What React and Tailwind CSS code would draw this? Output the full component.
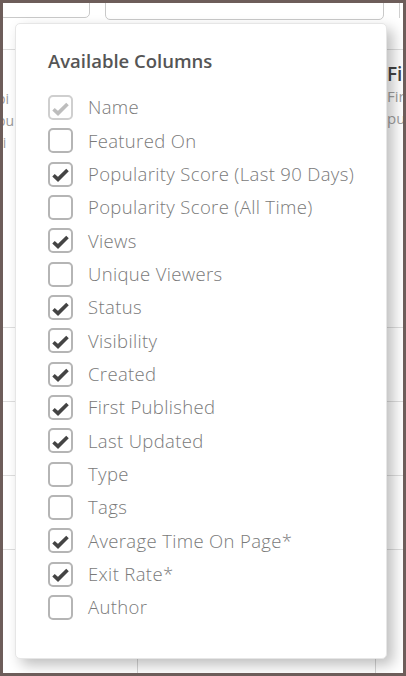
import React from 'react';

const columns = [
  { label: 'Name', checked: true, disabled: true },
  { label: 'Featured On', checked: false },
  { label: 'Popularity Score (Last 90 Days)', checked: true },
  { label: 'Popularity Score (All Time)', checked: false },
  { label: 'Views', checked: true },
  { label: 'Unique Viewers', checked: false },
  { label: 'Status', checked: true },
  { label: 'Visibility', checked: true },
  { label: 'Created', checked: true },
  { label: 'First Published', checked: true },
  { label: 'Last Updated', checked: true },
  { label: 'Type', checked: false },
  { label: 'Tags', checked: false },
  { label: 'Average Time On Page*', checked: true },
  { label: 'Exit Rate*', checked: true },
  { label: 'Author', checked: false },
];

function CheckMark({ color }) {
  return (
    <svg width="17" height="14" viewBox="0 0 17 14" className="mt-[2px] -ml-[1px]">
      <path d="M1.5 7.2 L6 11.4 L15.5 2" fill="none" stroke={color} strokeWidth="3.6" strokeLinejoin="miter" />
    </svg>
  );
}

function ColumnRow({ label, checked, disabled }) {
  return (
    <label className="flex h-[33.33px] items-center gap-[15px]">
      <span
        className={`flex h-[25px] w-[25px] shrink-0 items-center justify-center rounded-[5px] border-2 bg-white ${
          disabled ? 'border-[#cfcfcf]' : 'border-[#b5b5b5]'
        }`}
      >
        {checked && <CheckMark color={disabled ? '#bdbdbd' : '#444444'} />}
      </span>
      <span className="text-[18.5px] font-light leading-none tracking-[0.35px] text-[#7a7a7a]">{label}</span>
    </label>
  );
}

export default function App() {
  return (
    <div className="relative h-[676px] w-[406px] overflow-hidden border-[3px] border-[#6d5d5a] bg-white font-['Open_Sans',sans-serif]">
      {/* table behind the menu */}
      <div className="flex h-[17px] gap-[15px]">
        <div className="-mt-[4px] h-[19px] w-[91px] shrink-0 -ml-[4px] rounded-b-[5px] border border-[#c9c9c9]" />
        <div className="-mt-[4px] h-[21px] w-[279px] shrink-0 rounded-b-[5px] border border-[#c9c9c9]" />
        <div className="-mt-[4px] h-[19px] w-[20px] shrink-0 border-l border-[#d0d0d0]" />
      </div>
      <div className="mt-[29px] border-t border-[#dedede]" />
      <div className="flex">
        <div className="w-[134px] shrink-0 pt-[38px] text-[14px] leading-[22px] text-[#9a9a9a]">
          <div className="-ml-[6px]">pi</div>
          <div className="-ml-[6px]">pu</div>
          <div className="-ml-[6px]">ri</div>
        </div>
        <div className="w-[238px] shrink-0" />
        <div className="pl-[12px] pt-[13px]">
          <div className="text-[19px] font-semibold leading-[22px] text-[#444]">First</div>
          <div className="text-[15px] leading-[22px] text-[#a0a0a0]">First</div>
          <div className="text-[15px] leading-[22px] text-[#a0a0a0]">pub</div>
        </div>
      </div>
      <div className="mt-[173px] flex flex-col">
        <div className="h-[74px] border-t border-[#dedede]" />
        <div className="h-[74px] border-t border-[#dedede]" />
        <div className="h-[74px] border-t border-[#dedede]" />
        <div className="h-[100px] border-t border-[#dedede]" />
      </div>
      <div className="absolute bottom-0 left-[134px] h-[14px] border-l border-[#d5d5d5]" />
      <div className="absolute bottom-0 left-[372px] h-[14px] border-l border-[#d5d5d5]" />

      {/* column picker menu */}
      <div className="absolute left-[12px] top-[20px] h-[636px] w-[372px] rounded-[5px] border border-[#e6e6e6] bg-white pl-[32px] pt-[25px] shadow-[6px_6px_14px_rgba(0,0,0,0.26)]">
        <h3 className="text-[18.5px] font-semibold leading-[24px] text-[#555]">Available Columns</h3>
        <div className="mt-[18px] flex flex-col">
          {columns.map((c) => (
            <ColumnRow key={c.label} {...c} />
          ))}
        </div>
      </div>
    </div>
  );
}
